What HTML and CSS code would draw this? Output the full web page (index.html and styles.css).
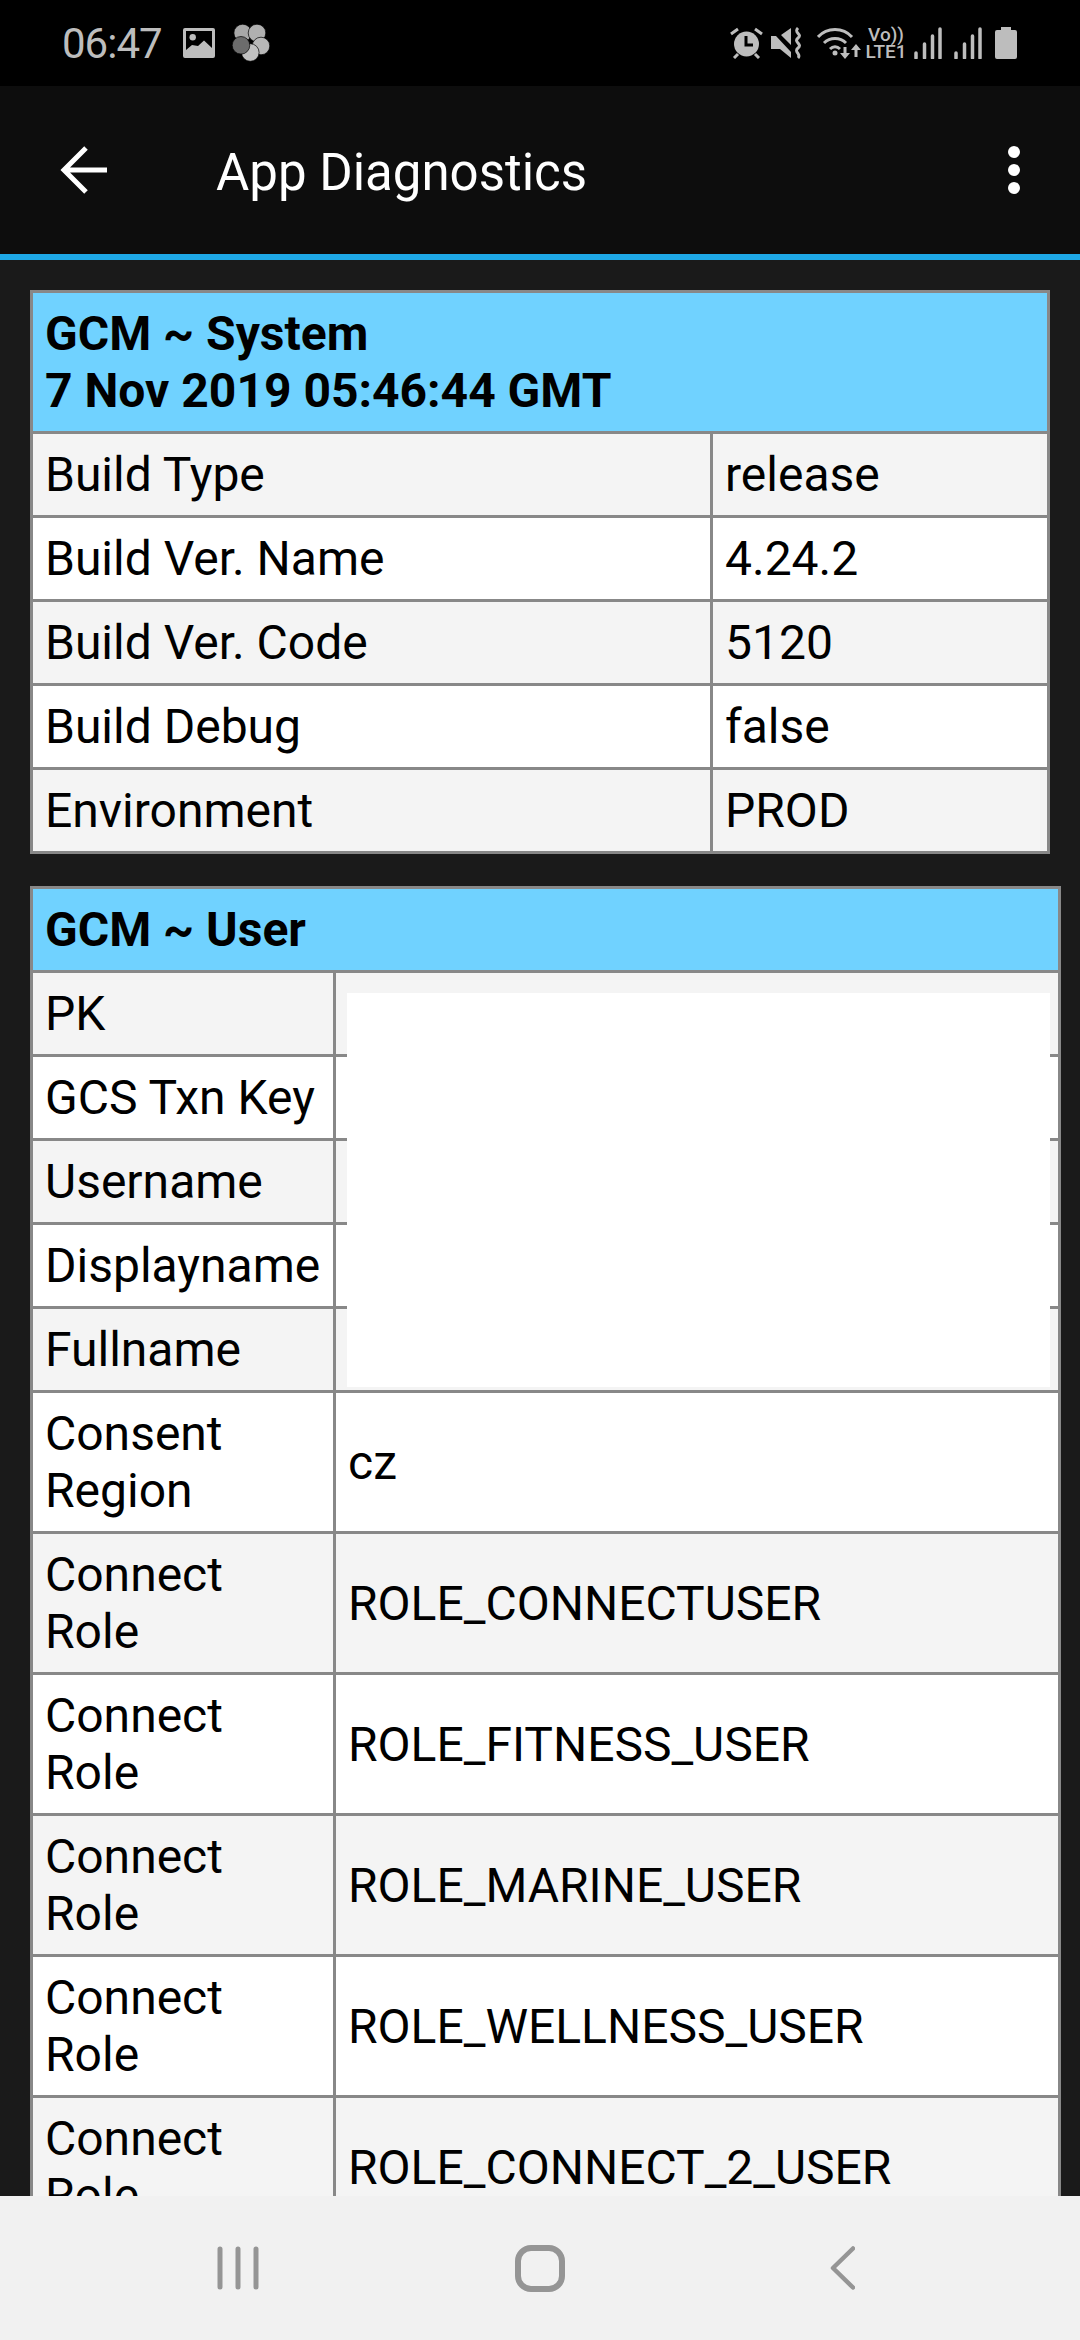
FILE: index.html
```html
<!DOCTYPE html>
<html lang="en">
<head>
    <meta charset="UTF-8">
    <title>App Diagnostics</title>
    <link rel="stylesheet" href="styles.css">
</head>
<body>
    <div class="statusbar">
        <div class="status-left">
            <span class="clock">06:47</span>
            <svg class="ic-image" viewBox="0 0 32 30"><path fill="#bdbdbd" fill-rule="evenodd" d="M2 0h28a2 2 0 0 1 2 2v26a2 2 0 0 1-2 2H2a2 2 0 0 1-2-2V2a2 2 0 0 1 2-2zM3 3v19l6-5 6 1 6-5.500 8 7.500V3z"/><circle cx="9.700" cy="9.300" r="3.200" fill="#bdbdbd"/></svg>
            <svg class="ic-pin" viewBox="0 0 38 38">
                <g stroke="#000" stroke-width="0.700">
                    <circle cx="10.700" cy="9" r="8.800" fill="#a8a8a8"/>
                    <circle cx="25" cy="9" r="8.800" fill="#b0b0b0"/>
                    <circle cx="29" cy="22" r="8.800" fill="#b8b8b8"/>
                    <circle cx="18.300" cy="28.500" r="8.800" fill="#c2c2c2"/>
                    <circle cx="9" cy="21.300" r="8.800" fill="#6c6c6c"/>
                </g>
            </svg>
        </div>
        <div class="status-right">
            <svg class="ic-alarm" viewBox="0 0 33 32"><circle cx="16.500" cy="17" r="12.500" fill="#bdbdbd"/><path d="M16 9v9h7" fill="none" stroke="#000" stroke-width="3"/><path d="M1 7l7-5M32 7l-7-5M4 31l4-4M29 31l-4-4" stroke="#bdbdbd" stroke-width="3" fill="none"/></svg>
            <svg class="ic-mute" viewBox="0 0 32 32"><path fill="#bdbdbd" d="M0 9h5L20 25v6L9 22H0zM10 8l10-7v17z"/><path d="M27 1c-5 5 5 6 0 10s5 6 0 10 4 6 0 10" fill="none" stroke="#bdbdbd" stroke-width="3"/></svg>
            <svg class="ic-wifi" viewBox="0 0 44 32"><path d="M1 10C10 0 26 0 35 10M7 16c6-6 16-6 22 0M13 22c3-3 7-3 10 0" fill="none" stroke="#bdbdbd" stroke-width="3"/><circle cx="18" cy="26" r="2.500" fill="#bdbdbd"/><path d="M26.500 20h3v6h3.500l-5 6-5-6h3.500zM39 17l5 6h-3.500v7h-3v-7H34z" fill="#bdbdbd"/></svg>
            <div class="volte"><span>Vo))</span><span>LTE1</span></div>
            <svg class="ic-signal" viewBox="0 0 29 32"><path d="M3 26v5M11.500 17v14M19.500 9v22M27 2v29" stroke="#bdbdbd" stroke-width="3.500" stroke-linecap="round" fill="none"/></svg>
            <svg class="ic-signal" viewBox="0 0 29 32"><path d="M3 26v5M11.500 17v14M19.500 9v22M27 2v29" stroke="#bdbdbd" stroke-width="3.500" stroke-linecap="round" fill="none"/></svg>
            <svg class="ic-batt" viewBox="0 0 22 32"><path fill="#bdbdbd" d="M6 0h10v3h4a2 2 0 0 1 2 2v25a2 2 0 0 1-2 2H2a2 2 0 0 1-2-2V5a2 2 0 0 1 2-2h4z"/></svg>
        </div>
    </div>

    <div class="toolbar">
        <svg class="back" viewBox="0 0 48 48"><path d="M47 24H6M26 2L4 24l22 22" fill="none" stroke="#fff" stroke-width="5"/></svg>
        <div class="title">App Diagnostics</div>
        <div class="menu"><i></i><i></i><i></i></div>
    </div>

    <div class="content">
        <table class="diag sys">
            <col class="sys-key">
            <col>
            <tr class="head"><th colspan="2">GCM ~ System<br>7 Nov 2019 05:46:44 GMT</th></tr>
            <tr><td>Build Type</td><td>release</td></tr>
            <tr><td>Build Ver. Name</td><td>4.24.2</td></tr>
            <tr><td>Build Ver. Code</td><td>5120</td></tr>
            <tr><td>Build Debug</td><td>false</td></tr>
            <tr><td>Environment</td><td>PROD</td></tr>
        </table>

        <div class="userwrap">
            <table class="diag user">
                <col class="user-key">
                <col>
                <tr class="head"><th colspan="2">GCM ~ User</th></tr>
                <tr><td>PK</td><td></td></tr>
                <tr><td>GCS Txn Key</td><td></td></tr>
                <tr><td>Username</td><td></td></tr>
                <tr><td>Displayname</td><td></td></tr>
                <tr><td>Fullname</td><td></td></tr>
                <tr><td>Consent Region</td><td>cz</td></tr>
                <tr><td>Connect Role</td><td>ROLE_CONNECTUSER</td></tr>
                <tr><td>Connect Role</td><td>ROLE_FITNESS_USER</td></tr>
                <tr><td>Connect Role</td><td>ROLE_MARINE_USER</td></tr>
                <tr><td>Connect Role</td><td>ROLE_WELLNESS_USER</td></tr>
                <tr><td>Connect Role</td><td>ROLE_CONNECT_2_USER</td></tr>
            </table>
            <div class="redact"></div>
        </div>
    </div>

    <div class="navbar">
        <svg class="nav-recent" viewBox="0 0 42 44"><path d="M3 3v38M21 3v38M39 3v38" stroke="#959595" stroke-width="5" stroke-linecap="round" fill="none"/></svg>
        <svg class="nav-home" viewBox="0 0 50 47"><rect x="3" y="3" width="44" height="41" rx="13" fill="none" stroke="#959595" stroke-width="6"/></svg>
        <svg class="nav-back" viewBox="0 0 25 44"><path d="M23 2.500L3 22l20 19.500" stroke="#959595" stroke-width="4.500" stroke-linecap="round" stroke-linejoin="round" fill="none"/></svg>
    </div>
</body>
</html>
```

FILE: styles.css
```css
html, body {
    margin: 0;
    padding: 0;
}

body {
    width: 1080px;
    height: 2340px;
    display: flex;
    flex-direction: column;
    overflow: hidden;
    background: #1a1a1a;
    font-family: Roboto, "Liberation Sans", sans-serif;
    color: #000;
}

.statusbar {
    height: 86px;
    flex: none;
    background: #000;
    display: flex;
    justify-content: space-between;
    align-items: center;
    padding: 0 63px 0 62px;
    color: #bdbdbd;
}

.status-left, .status-right {
    display: flex;
    align-items: center;
}

.clock {
    font-size: 42px;
    letter-spacing: -1px;
    width: 121px;
}

.ic-image {
    width: 32px;
    height: 30px;
    margin-right: 17px;
}

.ic-pin {
    width: 38px;
    height: 38px;
}

.ic-alarm {
    width: 33px;
    height: 32px;
    margin-right: 8px;
}

.ic-mute {
    width: 32px;
    height: 32px;
    margin-right: 14px;
}

.ic-wifi {
    width: 44px;
    height: 32px;
    margin-right: 5px;
}

.volte {
    display: flex;
    flex-direction: column;
    align-items: center;
    width: 40px;
    font-size: 19px;
    line-height: 17px;
    font-weight: 500;
    margin-right: 7px;
}

.ic-signal {
    width: 29px;
    height: 32px;
    margin-right: 11px;
}

.ic-signal + .ic-batt {
    margin-left: 2px;
}

.ic-batt {
    width: 22px;
    height: 32px;
}

.toolbar {
    height: 168px;
    flex: none;
    background: #0d0d0d;
    border-bottom: 6px solid #1ea8e6;
    display: flex;
    align-items: center;
}

.back {
    width: 48px;
    height: 48px;
    margin-left: 60px;
}

.title {
    color: #fff;
    font-size: 51px;
    margin-left: 108px;
    padding-top: 4px;
}

.menu {
    margin-left: auto;
    margin-right: 60px;
    display: flex;
    flex-direction: column;
    gap: 6px;
}

.menu i {
    display: block;
    width: 12px;
    height: 12px;
    border-radius: 50%;
    background: #fff;
}

.content {
    flex: 1;
    min-height: 0;
    overflow: hidden;
    padding: 30px 0 0 30px;
}

.diag {
    border-collapse: separate;
    border-spacing: 0;
    table-layout: fixed;
    border-right: 3px solid #888;
    border-bottom: 3px solid #888;
    font-size: 48px;
    line-height: 57px;
}

.diag th, .diag td {
    border-left: 3px solid #888;
    border-top: 3px solid #888;
    padding: 12px;
    text-align: left;
    vertical-align: middle;
}

.diag th {
    background: #70d2ff;
    font-weight: bold;
}

.diag tr:nth-child(even) td {
    background: #f4f4f4;
}

.diag tr:nth-child(odd) td {
    background: #fff;
}

.sys {
    width: 1020px;
    margin-bottom: 32px;
}

.sys-key {
    width: 680px;
}

.user {
    width: 1031px;
}

.user-key {
    width: 303px;
}

.userwrap {
    position: relative;
}

.redact {
    position: absolute;
    left: 317px;
    top: 107px;
    width: 703px;
    height: 394px;
    background: #fff;
}

.navbar {
    height: 144px;
    flex: none;
    background: #f1f1f1;
    display: flex;
    align-items: center;
}

.nav-recent {
    width: 42px;
    height: 44px;
    margin-left: 217px;
}

.nav-home {
    width: 50px;
    height: 47px;
    margin-left: 256px;
}

.nav-back {
    width: 25px;
    height: 44px;
    margin-left: 265px;
}
```
